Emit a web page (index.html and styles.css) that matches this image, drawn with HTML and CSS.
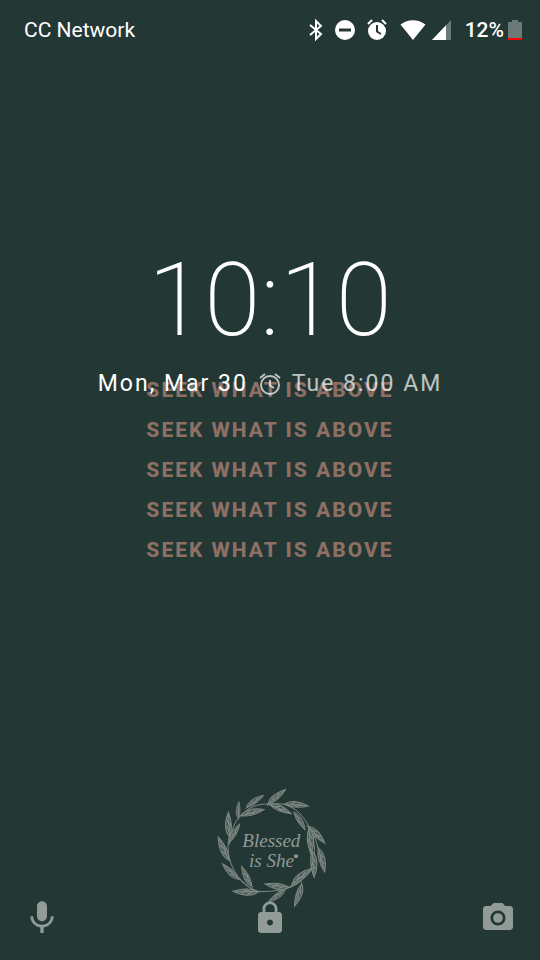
FILE: index.html
```html
<!DOCTYPE html>
<html lang="en">
<head>
<meta charset="UTF-8">
<meta name="viewport" content="width=device-width, initial-scale=1.0">
<link rel="stylesheet" href="styles.css">
<title>Lock Screen</title>
</head>
<body>
<div class="screen">
  <div class="wallpaper">
    <div class="verse">
      <p>SEEK WHAT IS ABOVE</p>
      <p>SEEK WHAT IS ABOVE</p>
      <p>SEEK WHAT IS ABOVE</p>
      <p>SEEK WHAT IS ABOVE</p>
      <p>SEEK WHAT IS ABOVE</p>
    </div>
    <svg class="wreath" viewBox="0 0 390 390">
      <defs>
        <g id="leaf">
          <path class="blade" d="M0 0C14 -14 42 -13 70 0C44 8 16 8 0 0Z"/>
          <path d="M-6 2L0 0L62 0M14 0L30 -7M34 0L48 -5M24 0L40 5"/>
        </g>
      </defs>
      <g class="branch">
        <path d="M108 107C125 86 155 70 190 72C215 70 245 70 262 82"/>
        <path d="M240 74C275 85 295 108 312 140C328 165 335 185 340 208"/>
        <path d="M314 140C328 180 334 215 322 255C312 282 285 312 240 326"/>
        <path d="M292 300C270 320 235 335 160 335C130 325 100 300 82 270"/>
        <path d="M160 335C125 322 90 290 76 245C66 215 68 185 74 165"/>
        <path d="M72 195C76 155 90 120 112 102"/>
        <use href="#leaf" transform="translate(190 72) rotate(-40) scale(.97)"/>
        <use href="#leaf" transform="translate(125 82) rotate(-35) scale(.89)"/>
        <use href="#leaf" transform="translate(195 74) rotate(23)"/>
        <use href="#leaf" transform="translate(240 72) rotate(5)"/>
        <use href="#leaf" transform="translate(268 98) rotate(58) scale(.87)"/>
        <use href="#leaf" transform="translate(310 140) rotate(45)"/>
        <use href="#leaf" transform="translate(312 145) rotate(86) scale(1.1)"/>
        <use href="#leaf" transform="translate(340 205) rotate(75) scale(1.05)"/>
        <use href="#leaf" transform="translate(322 215) rotate(86) scale(1.1)"/>
        <use href="#leaf" transform="translate(262 312) rotate(-38) scale(1.1)"/>
        <use href="#leaf" transform="translate(290 312) rotate(108)"/>
        <use href="#leaf" transform="translate(252 322) rotate(188) scale(1.05)"/>
        <use href="#leaf" transform="translate(240 328) rotate(143) scale(.9)"/>
        <use href="#leaf" transform="translate(160 335) rotate(181) scale(1.08)"/>
        <use href="#leaf" transform="translate(140 318) rotate(243) scale(.95)"/>
        <use href="#leaf" transform="translate(100 297) rotate(224) scale(.95)"/>
        <use href="#leaf" transform="translate(72 240) rotate(245) scale(1.08)"/>
        <use href="#leaf" transform="translate(75 185) rotate(-61) scale(.87)"/>
        <use href="#leaf" transform="translate(74 170) rotate(-93) scale(1.05)"/>
        <use href="#leaf" transform="translate(100 115) rotate(-88) scale(.72)"/>
        <use href="#leaf" transform="translate(108 107) rotate(-15) scale(1.02)"/>
      </g>
      <g class="brand">
        <text x="112" y="202">Blessed</text>
        <text x="132" y="262">is She</text>
        <circle cx="273" cy="229" r="6"/>
      </g>
    </svg>
  </div>

  <div class="lockscreen">
    <header class="status">
      <span class="carrier">CC Network</span>
      <div class="tray">
        <div class="icons">
          <svg width="14" height="22" viewBox="0 0 14 22"><path class="line" d="M1 6L12 15L7 20V2L12 7L1 16"/></svg>
          <svg width="20" height="20" viewBox="0 0 20 20"><path class="solid" fill-rule="evenodd" d="M10 0A10 10 0 1 1 10 20A10 10 0 1 1 10 0ZM4 8.500V11.500H16V8.500Z"/></svg>
          <svg width="20" height="22" viewBox="0 0 20 22"><circle class="solid" cx="10" cy="12" r="9"/><path class="line" d="M1 5L5 1M19 5L15 1"/><path class="hand" d="M10 6V12.500L14 15"/></svg>
        </div>
        <div class="signal">
          <svg width="26" height="20" viewBox="0 0 26 20"><path class="solid" d="M13 20L0.500 4.500C8 -1.200 18 -1.200 25.500 4.500Z"/></svg>
          <svg width="20" height="20" viewBox="0 0 20 20"><path class="faded" d="M0 20H19V0Z"/><path class="solid" d="M0 20H14V5.300Z"/></svg>
        </div>
        <div class="battery">
          <span>12%</span>
          <svg width="14" height="20" viewBox="0 0 14 20"><path class="faded" d="M0 2H4V0H10V2H14V18H0Z"/><path class="low" d="M0 18H14V20H0Z"/></svg>
        </div>
      </div>
    </header>

    <main class="clock">
      <time class="time">10:10</time>
      <div class="date">
        <span>Mon, Mar 30</span>
        <span class="alarm">
          <svg width="24" height="24" viewBox="0 0 24 24"><circle cx="12" cy="13" r="9"/><path d="M2 6L7 2M22 6L17 2M12 8V13.500L16 16"/></svg>
          Tue 8:00 AM
        </span>
      </div>
    </main>

    <footer class="shortcuts">
      <button type="button" aria-label="Voice assist">
        <svg width="40" height="40" viewBox="0 0 24 24"><path d="M12 14c1.660 0 3-1.340 3-3V5c0-1.660-1.340-3-3-3S9 3.340 9 5v6c0 1.660 1.340 3 3 3zM17.300 11c0 3-2.540 5.100-5.300 5.100S6.700 14 6.700 11H5c0 3.410 2.720 6.230 6 6.720V21h2v-3.280c3.280-.48 6-3.300 6-6.720h-1.700z"/></svg>
      </button>
      <button type="button" aria-label="Unlock">
        <svg width="36" height="36" viewBox="0 0 24 24"><path d="M18 8h-1V6c0-2.760-2.240-5-5-5S7 3.240 7 6v2H6c-1.100 0-2 .9-2 2v10c0 1.100.9 2 2 2h12c1.100 0 2-.9 2-2V10c0-1.100-.9-2-2-2zm-6 9c-1.100 0-2-.9-2-2s.9-2 2-2 2 .9 2 2-.9 2-2 2zm3.100-9H8.900V6c0-1.710 1.390-3.100 3.100-3.100s3.100 1.390 3.100 3.100v2z"/></svg>
      </button>
      <button type="button" aria-label="Camera">
        <svg width="36" height="36" viewBox="0 0 24 24"><circle cx="12" cy="12" r="3.200"/><path d="M9 2L7.170 4H4c-1.100 0-2 .9-2 2v12c0 1.100.9 2 2 2h16c1.100 0 2-.9 2-2V6c0-1.100-.9-2-2-2h-3.170L15 2H9zm3 15c-2.760 0-5-2.240-5-5s2.240-5 5-5 5 2.240 5 5-2.240 5-5 5z"/></svg>
      </button>
    </footer>
  </div>
</div>
</body>
</html>
```
FILE: styles.css
```css
body {
  margin: 0;
  background-color: #233834;
  color: #ffffff;
  font-family: Roboto, sans-serif;
}
svg {
  display: block;
  fill: none;
}
/* wallpaper and lock screen share one cell */
.screen {
  display: grid;
  min-height: 100vh;
}
.wallpaper,
.lockscreen {
  grid-area: 1 / 1;
  display: flex;
  flex-direction: column;
}
.wallpaper {
  align-items: center;
  justify-content: space-between;
  padding: 370px 0 50px;
  box-sizing: border-box;
}
.verse p {
  margin: 0;
  font-size: 21px;
  font-weight: 800;
  line-height: 40px;
  letter-spacing: 2px;
  color: #8e6f64;
}
.wreath {
  width: 130px;
  height: 130px;
}
.branch {
  stroke: #7f8884;
  stroke-width: 3;
}
.blade {
  fill: #4d5d58;
}
.brand {
  fill: #929996;
  font-family: "Liberation Serif", serif;
  font-size: 57px;
  font-style: italic;
}
.status {
  display: flex;
  justify-content: space-between;
  align-items: center;
  height: 60px;
  padding: 0 18px 0 24px;
  font-size: 21px;
}
.tray,
.icons,
.signal,
.battery {
  display: flex;
  align-items: center;
}
.tray {
  gap: 13px;
}
.icons {
  gap: 12px;
}
.signal {
  gap: 6px;
}
.battery {
  gap: 4px;
  font-weight: 500;
}
.solid {
  fill: #ffffff;
}
.faded {
  fill: #6b7a76;
}
.low {
  fill: #ff0000;
}
.line {
  stroke: #ffffff;
  stroke-width: 2;
}
.hand {
  stroke: #233834;
  stroke-width: 2;
}
.clock {
  flex: 1;
  display: flex;
  flex-direction: column;
  align-items: center;
  padding-top: 180px;
}
.time {
  font-size: 102px;
  font-weight: 200;
  line-height: 120px;
}
.date {
  display: flex;
  gap: 10px;
  font-size: 23px;
  line-height: 28px;
  letter-spacing: 2px;
  margin-top: 10px;
}
.alarm {
  display: flex;
  align-items: center;
  gap: 10px;
  opacity: 0.7;
}
.alarm svg {
  stroke: #ffffff;
  stroke-width: 2;
}
.shortcuts {
  display: flex;
  justify-content: space-between;
  align-items: center;
  padding: 0 22px 22px;
}
.shortcuts button {
  display: flex;
  align-items: center;
  justify-content: center;
  width: 40px;
  padding: 0;
  border: none;
  background: none;
  cursor: pointer;
}
.shortcuts svg {
  fill: #919c99;
}
```
